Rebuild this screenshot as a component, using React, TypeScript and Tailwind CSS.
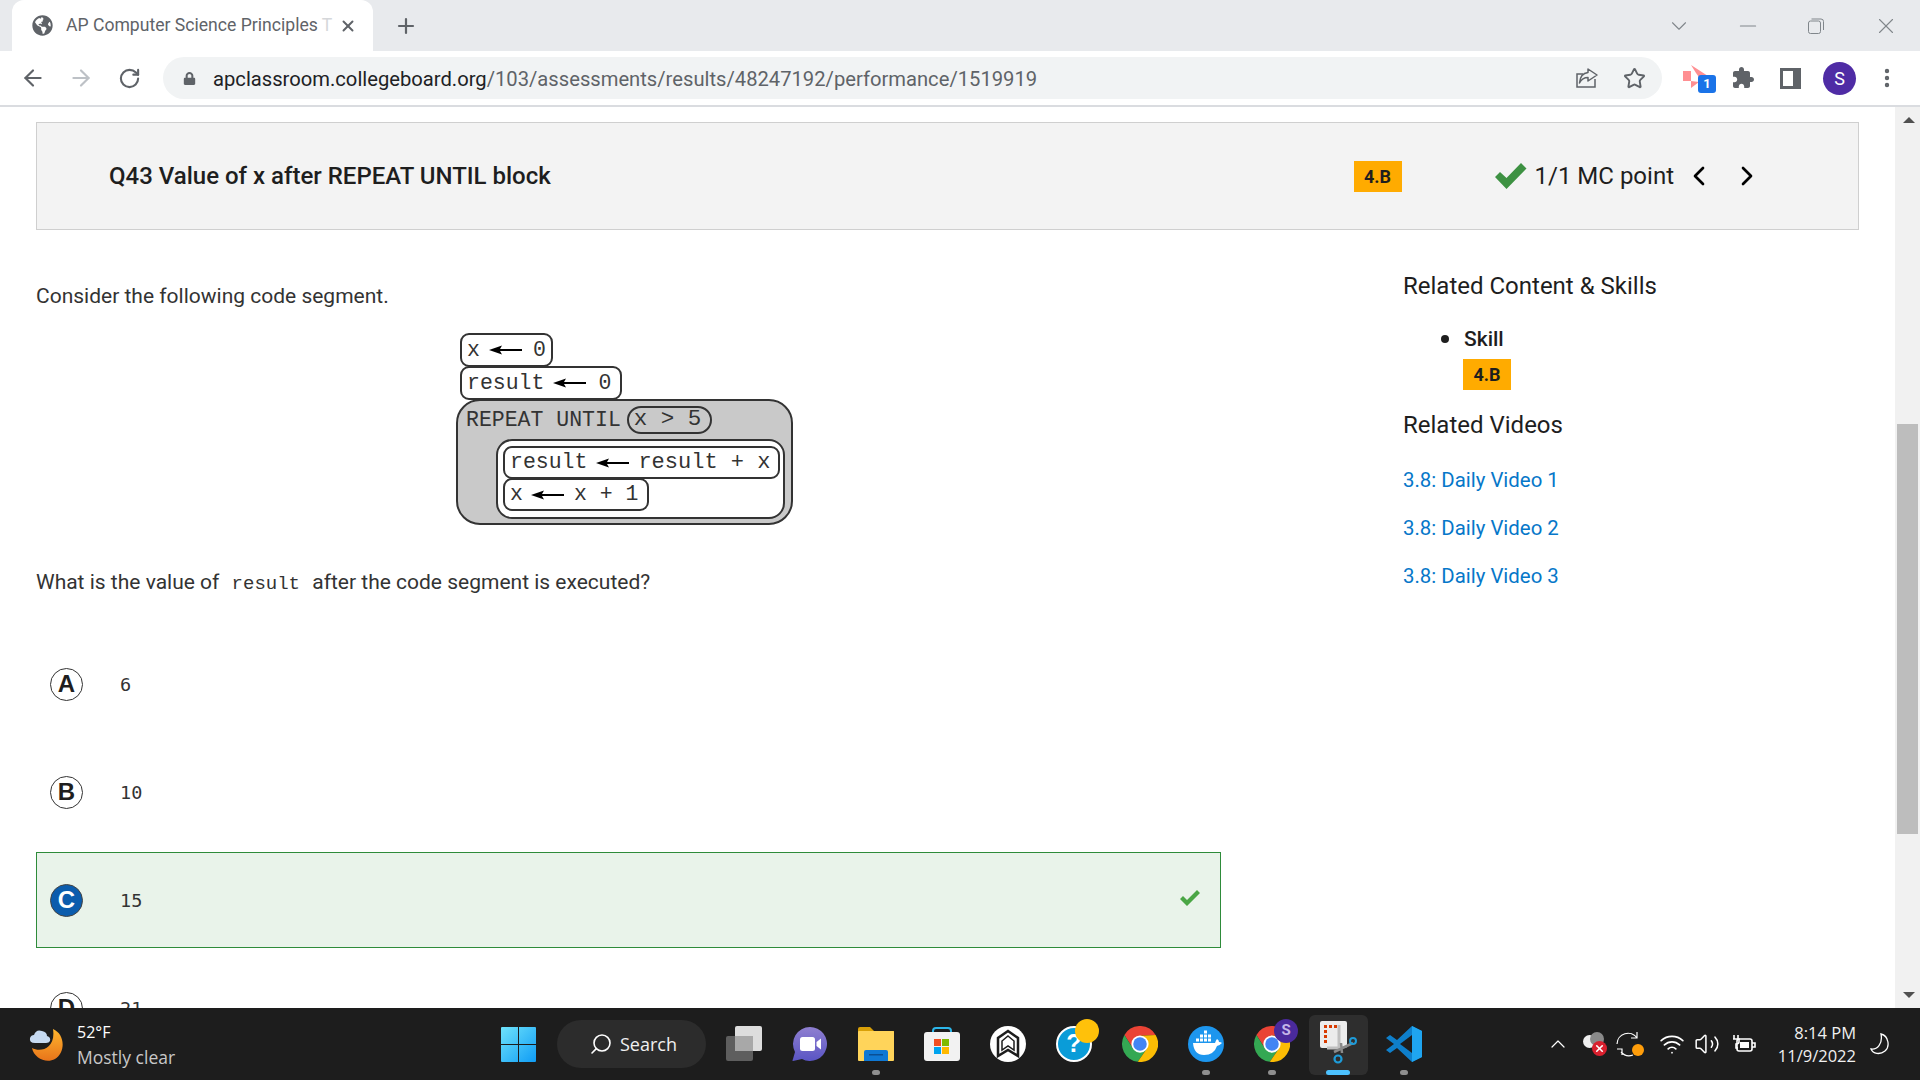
import { ArrowLeft, ArrowRight, ChevronDown, ChevronLeft, ChevronRight, ChevronUp, Minus, MoreVertical, Plus, RotateCw, Search, Star, Volume2, Wifi, X } from "lucide-react";
import { FaGlobeAmericas, FaLock } from "react-icons/fa";
import type { ReactNode } from "react";

function ChromeLogo() {
  return (
    <svg width="36" height="36" viewBox="0 0 48 48">
      <path d="M24 13 L44.8 12 A24 24 0 0 0 3.2 12 L14.5 29.5 Z" fill="#ea4335" />
      <path d="M3.2 12 A24 24 0 0 0 21 47.8 L33.5 29.5 L14.5 29.5 Z" fill="#34a853" />
      <path d="M44.8 12 L24 13 L33.5 29.5 L21 47.8 A24 24 0 0 0 44.8 12 Z" fill="#fbbc04" />
      <circle cx="24" cy="24" r="11.5" fill="#fff" />
      <circle cx="24" cy="24" r="9" fill="#4285f4" />
    </svg>
  );
}

function Arrow() {
  return (
    <svg width="33" height="10" viewBox="0 0 33 10" className="shrink-0">
      <path d="M0 5 L13 0.5 L11 4 L33 4 L33 6 L11 6 L13 9.5 Z" fill="#000" />
    </svg>
  );
}

function CodeBox({ className, children }: { className: string; children: ReactNode }) {
  return (
    <div className={`flex items-center border-2 border-[#333] bg-white rounded-[9px] font-['Liberation_Mono',monospace] text-[21.5px] text-[#333] whitespace-pre ${className}`}>
      {children}
    </div>
  );
}

function Diagram() {
  return (
    <div className="ml-[420px] mt-[23px] w-[337px] flex flex-col">
      <CodeBox className="ml-[4px] w-[93px] h-[34px] pl-[5px]">
        x<span className="w-[9px]" /><Arrow /><span className="w-[11px]" />0
      </CodeBox>
      <CodeBox className="ml-[4px] -mt-px w-[162px] h-[34px] pl-[5px]">
        result<span className="w-[9px]" /><Arrow /><span className="w-[12px]" />0
      </CodeBox>
      <div className="relative -mt-px h-[126px] rounded-[24px] border-2 border-[#333] bg-[#c9c9c9] pl-[8px] pt-[5px]">
        <div className="flex items-center">
          <span className="font-['Liberation_Mono',monospace] text-[21.5px] text-[#333] leading-[27px]">REPEAT UNTIL</span>
          <div className="ml-[6px] w-[85px] h-[28px] rounded-[14px] border-2 border-[#333] bg-[#c9c9c9] pl-[5px] flex items-center font-['Liberation_Mono',monospace] text-[22.5px] text-[#333] whitespace-pre">x &gt; 5</div>
        </div>
        <div className="ml-[30px] mt-[5px] mr-[6px] w-[289px] h-[80px] rounded-[16px] border-2 border-[#333] bg-white pl-[5px] pt-[5px]">
          <CodeBox className="w-[277px] h-[33px] pl-[5px]">
            result<span className="w-[9px]" /><Arrow /><span className="w-[9px]" /><span className="text-[22px]">result + x</span>
          </CodeBox>
          <CodeBox className="-mt-px w-[146px] h-[33px] pl-[5px]">
            x<span className="w-[8px]" /><Arrow /><span className="w-[10px]" />x + 1
          </CodeBox>
        </div>
      </div>
    </div>
  );
}

function Badge({ className = "" }: { className?: string }) {
  return (
    <div className={`w-[48px] h-[31px] bg-[#ffab00] flex items-center justify-center text-[18px] font-bold text-[#1e1e1e] ${className}`}>4.B</div>
  );
}

function Option({ letter, value, correct }: { letter: string; value: string; correct?: boolean }) {
  return (
    <div className={`relative h-[96px] mb-[12px] flex items-center ${correct ? "border border-[#2e8b3a] bg-[#e9f3ea] pl-[13px]" : "pl-[14px]"}`}>
      <div className={`w-[33px] h-[33px] rounded-full flex items-center justify-center text-[24px] font-bold font-['Liberation_Sans',sans-serif] ${correct ? "bg-[#0b5cad] border border-[#444] text-white" : "border border-[#333] text-[#1e1e1e]"}`}>
        {letter}
      </div>
      <span className="ml-[37px] mt-[1px] font-['DejaVu_Sans_Mono',monospace] text-[18.5px] text-[#333]">{value}</span>
      {correct && (
        <svg className="ml-auto mr-[20px] -mt-[4px]" width="20" height="16" viewBox="0 0 20 16">
          <path d="M0 9 L3 6 L7 10 L17 0 L20 3 L7 16 Z" fill="#4aa645" />
        </svg>
      )}
    </div>
  );
}

function Dock({ children, dot, active }: { children: ReactNode; dot?: boolean; active?: boolean }) {
  return (
    <div className="relative w-[66px] h-full flex items-center justify-center">
      {active && <div className="absolute left-[4px] top-[7px] w-[59px] h-[60px] rounded-[6px] bg-[#2e2e2e]" />}
      <div className="relative -mt-[1px] flex items-center justify-center">{children}</div>
      {dot && <div className="absolute bottom-[5px] left-[29px] w-[8px] h-[5px] rounded-full bg-[#8f8f8f]" />}
      {active && <div className="absolute bottom-[5px] left-[21px] w-[24px] h-[5px] rounded-full bg-[#4cc2ff]" />}
    </div>
  );
}

export default function App() {
  return (
    <div className="w-[1920px] h-[1080px] flex flex-col overflow-hidden bg-white font-['Roboto',sans-serif] text-[#1e1e1e]">
      {/* tab strip */}
      <div className="h-[51px] bg-[#e8eaed] flex items-stretch pl-[12px]">
        <div className="w-[361px] rounded-t-[12px] bg-white flex items-center pl-[20px]">
          <FaGlobeAmericas className="text-[#5f6368] shrink-0" size={21} />
          <div className="ml-[13px] w-[268px] whitespace-nowrap text-[17.6px] text-[#5f6368]">
            AP Computer Science Principles <span className="text-[#d5d7da]">T</span>
          </div>
          <X className="ml-[5px] text-[#5f6368] shrink-0" size={18} strokeWidth={2.6} />
        </div>
        <div className="ml-[21px] flex items-center">
          <Plus className="text-[#5f6368]" size={24} strokeWidth={2.2} />
        </div>
        <div className="ml-auto flex items-center pr-[21px] text-[#80868b]">
          <ChevronDown size={26} strokeWidth={1} />
          <Minus className="ml-[43px]" size={26} strokeWidth={1} />
          <svg className="ml-[47px]" width="16" height="16" viewBox="0 0 16 16" fill="none" stroke="#80868b" strokeWidth="1">
            <rect x="0.5" y="3" width="12" height="12.5" rx="2" />
            <path d="M3.5 1 H13 Q15.5 1 15.5 3.5 V12" />
          </svg>
          <X className="ml-[49px]" size={26} strokeWidth={1} />
        </div>
      </div>

      {/* address bar */}
      <div className="h-[56px] border-b-2 border-[#dadce0] flex items-start pl-[9px] pt-[6px]">
        <div className="flex w-[144px]">
          <div className="w-[48px] h-[42px] flex items-center justify-center"><ArrowLeft className="text-[#5f6368]" size={26} strokeWidth={2} /></div>
          <div className="w-[48px] h-[42px] flex items-center justify-center"><ArrowRight className="text-[#bdc1c6]" size={26} strokeWidth={2} /></div>
          <div className="w-[48px] h-[42px] flex items-center justify-center"><RotateCw className="text-[#5f6368]" size={23} strokeWidth={2.2} /></div>
        </div>
        <div className="ml-[10px] w-[1499px] h-[42px] rounded-full bg-[#f1f3f4] flex items-center pl-[20px]">
          <FaLock className="text-[#5f6368]" size={13} />
          <div className="ml-[17px] mt-[2px] text-[20.2px] whitespace-nowrap text-[#202124]">
            apclassroom.collegeboard.org<span className="text-[#5f6368]">/103/assessments/results/48247192/performance/1519919</span>
          </div>
          <div className="ml-auto flex items-center pr-[16px]">
            <svg width="24" height="24" viewBox="0 0 24 24" fill="none" stroke="#5f6368" strokeWidth="1.5">
              <path d="M20 13 V21 H2 V8 H8" />
              <path d="M13 3 L22 9 L13 15 V11.5 C9 11.5 6.5 13 4.5 17 C5 11 8 7 13 6.5 Z" strokeLinejoin="round" />
            </svg>
            <Star className="ml-[24px] text-[#5f6368]" size={23} strokeWidth={2} />
          </div>
        </div>
        <div className="ml-[21px] h-[42px] flex items-center relative w-[28px]">
          <svg width="26" height="24" viewBox="0 0 26 24" className="-mt-[2px]">
            <path d="M8 0 L25 11 L18 15 L13 8 Z M0 6 H8 V16 H0 Z M8 16 L16 17 L8 23 Z" fill="#ff8f92" />
          </svg>
          <div className="absolute left-[15px] top-[18px] w-[18px] h-[18px] rounded-[3px] bg-[#1a73e8] text-white text-[13px] font-bold flex items-center justify-center">1</div>
        </div>
        <div className="ml-[20px] h-[42px] flex items-center">
          <svg width="24" height="24" viewBox="0 0 24 24" fill="#5f6368">
            <path d="M20.5 11H19V7c0-1.1-.9-2-2-2h-4V3.5C13 2.12 11.88 1 10.5 1S8 2.12 8 3.5V5H4c-1.1 0-1.99.9-1.99 2v3.8H3.5c1.49 0 2.7 1.21 2.7 2.7s-1.21 2.7-2.7 2.7H2V20c0 1.1.9 2 2 2h3.8v-1.5c0-1.49 1.21-2.7 2.7-2.7 1.49 0 2.7 1.21 2.7 2.7V22H17c1.1 0 2-.9 2-2v-4h1.5c1.38 0 2.5-1.12 2.5-2.5S21.88 11 20.5 11z" />
          </svg>
        </div>
        <div className="ml-[25px] h-[42px] flex items-center">
          <div className="w-[21px] h-[21px] border-[3px] border-[#5f6368] border-r-[8px]" />
        </div>
        <div className="ml-[22px] h-[42px] flex items-center">
          <div className="w-[33px] h-[33px] rounded-full bg-[#4f2ca5] text-white text-[18px] flex items-center justify-center">S</div>
        </div>
        <div className="ml-[19px] h-[42px] flex items-center"><MoreVertical className="text-[#5f6368]" size={24} strokeWidth={2.4} /></div>
      </div>

      {/* page */}
      <div className="flex-1 flex min-h-0 overflow-hidden">
        <main className="w-[1895px] pl-[36px] pt-[15px]">
          <div className="w-[1823px] h-[108px] border border-[#cfcfcf] bg-[#f3f3f3] flex items-center pl-[72px] pr-[95px]">
            <h1 className="flex-1 text-[24px] font-medium">Q43 Value of x after REPEAT UNTIL block</h1>
            <Badge />
            <svg className="ml-[93px]" width="32" height="26" viewBox="0 0 32 26">
              <path d="M0 14 L5 9 L11.5 15 L26 0 L31.5 5.5 L11.5 26 Z" fill="#3d9142" />
            </svg>
            <span className="ml-[8px] text-[24px]">1/1 MC point</span>
            <ChevronLeft className="ml-[9px] text-black" size={32} strokeWidth={2} />
            <ChevronRight className="ml-[16px] text-black" size={32} strokeWidth={2} />
          </div>

          <div className="flex">
            <section className="w-[1185px] pt-[52px]">
              <p className="text-[21px] leading-[28px] text-[#333]">Consider the following code segment.</p>
              <Diagram />
              <p className="mt-[43px] text-[21px] leading-[28px] text-[#333] flex items-baseline whitespace-pre">
                What is the value of <span className="mx-[7px] font-['Liberation_Mono',monospace] text-[19px]">result</span> after the code segment is executed?
              </p>
              <div className="mt-[38px]">
                <Option letter="A" value="6" />
                <Option letter="B" value="10" />
                <Option letter="C" value="15" correct />
                <Option letter="D" value="21" />
              </div>
            </section>
            <aside className="ml-[182px] pt-[40px]">
              <h2 className="text-[24px] leading-[32px]">Related Content &amp; Skills</h2>
              <div className="mt-[23px] ml-[38px] flex">
                <div className="mt-[10px] w-[8px] h-[8px] rounded-full bg-[#1e1e1e]" />
                <div className="ml-[15px]">
                  <div className="text-[21px] leading-[28px] font-medium">Skill</div>
                  <Badge className="-ml-px mt-[6px]" />
                </div>
              </div>
              <h2 className="mt-[19px] text-[24px] leading-[32px]">Related Videos</h2>
              <div className="mt-[25px] flex flex-col gap-[20px] text-[20.4px] leading-[28px] text-[#0677c9]">
                <a>3.8: Daily Video 1</a>
                <a>3.8: Daily Video 2</a>
                <a>3.8: Daily Video 3</a>
              </div>
            </aside>
          </div>
        </main>

        {/* scrollbar */}
        <div className="w-[25px] bg-[#f1f1f1] flex flex-col items-end">
          <div className="w-[23px] h-[26px] flex items-center justify-center text-[#505050]">
            <div className="w-0 h-0 border-l-[6px] border-r-[6px] border-b-[6px] border-l-transparent border-r-transparent border-b-[#505050]" />
          </div>
          <div className="mt-[291px] w-[21px] mr-[2px] h-[410px] bg-[#bdbdbd]" />
          <div className="w-[23px] mt-auto h-[26px] flex items-center justify-center">
            <div className="w-0 h-0 border-l-[6px] border-r-[6px] border-t-[6px] border-l-transparent border-r-transparent border-t-[#505050]" />
          </div>
        </div>
      </div>

      {/* taskbar */}
      <div className="h-[72px] bg-[#1d1d1d] flex items-stretch text-white">
        <div className="w-[501px] shrink-0 pl-[29px] flex items-center">
          <svg width="36" height="36" viewBox="0 0 36 36">
            <defs>
              <linearGradient id="moon" x1="0" y1="0" x2="0" y2="1">
                <stop offset="0" stopColor="#ffb62e" />
                <stop offset="1" stopColor="#e8741a" />
              </linearGradient>
            </defs>
            <path d="M24 3 C36 8 37 26 26 33 C17 38 5 32 3 22 C12 27 27 22 24 3 Z" fill="url(#moon)" />
            <path d="M6 17 Q0 17 1 12 Q2 9 5 9 Q7 3 13 5 Q18 6 18 10 Q22 11 21 15 Q20 17 17 17 Z" fill="#c6daf2" />
          </svg>
          <div className="ml-[12px] mt-[2px] flex flex-col font-['Open_Sans',sans-serif] leading-[25px]">
            <span className="text-[16px]">52°F</span>
            <span className="text-[#c8c8c8] text-[17.5px]">Mostly clear</span>
          </div>
        </div>
        <div className="flex items-center shrink-0">
          <svg width="35" height="35" viewBox="0 0 35 35">
            <defs>
              <linearGradient id="win" x1="0" y1="0" x2="1" y2="1">
                <stop offset="0" stopColor="#6fe3fb" />
                <stop offset="1" stopColor="#0f9cf5" />
              </linearGradient>
            </defs>
            <path d="M0 1 Q0 0 1 0 H17 V17 H0 Z M18 0 H34 Q35 0 35 1 V17 H18 Z M0 18 H17 V35 H1 Q0 35 0 34 Z M18 18 H35 V34 Q35 35 34 35 H18 Z" fill="url(#win)" />
          </svg>
          <div className="ml-[21px] w-[149px] h-[48px] rounded-full bg-[#2c2c2c] flex items-center pl-[32px]">
            <Search size={24} strokeWidth={1.6} className="-scale-x-100" />
            <span className="ml-[7px] text-[18px] font-['Open_Sans',sans-serif] text-[#f0f0f0]">Search</span>
          </div>
        </div>
        <div className="ml-[5px] flex items-stretch shrink-0">
          <Dock>
            <div className="relative w-[36px] h-[35px]">
              <div className="absolute left-0 bottom-0 w-[27px] h-[25px] rounded-[2px] bg-[#5e5e5e]" />
              <div className="absolute right-0 top-0 w-[27px] h-[25px] rounded-[2px] bg-[#e8e8e8] opacity-95" />
              <div className="absolute left-[9px] top-[10px] w-[18px] h-[15px] bg-[#a8a8a8]" />
            </div>
          </Dock>
          <Dock>
            <svg width="36" height="36" viewBox="0 0 36 36">
              <defs>
                <linearGradient id="meet" x1="0" y1="0" x2="0" y2="1">
                  <stop offset="0" stopColor="#8f7fd0" />
                  <stop offset="1" stopColor="#5a55c4" />
                </linearGradient>
              </defs>
              <path d="M18 1 A17 17 0 1 1 10 33 L1 35 Q0 35 1 33 L3 26 A17 17 0 0 1 18 1 Z" fill="url(#meet)" />
              <rect x="8" y="11" width="15" height="14" rx="2.5" fill="#fff" />
              <path d="M24.5 16 L29 12.5 V23.5 L24.5 20 Z" fill="#fff" />
            </svg>
          </Dock>
          <Dock dot>
            <svg width="36" height="34" viewBox="0 0 36 34">
              <path d="M0 2 Q0 0 2 0 H12 L16 4 H36 V12 H0 Z" fill="#d9a008" />
              <rect y="4" width="36" height="30" rx="1" fill="#ffd45a" />
              <path d="M6 34 V25 Q6 23 8 23 H28 Q30 23 30 25 V34 Z" fill="#0f78d4" />
              <rect x="11" y="27" width="14" height="1.5" fill="#0a4f94" />
            </svg>
          </Dock>
          <Dock>
            <svg width="36" height="36" viewBox="0 0 36 36">
              <path d="M9 9 V5 Q9 2 12 2 H24 Q27 2 27 5 V9" fill="none" stroke="#2cb6ea" strokeWidth="2" />
              <rect y="6" width="36" height="29" rx="3" fill="#f2f2f2" />
              <rect x="10" y="13" width="7" height="7" fill="#f25022" />
              <rect x="18" y="13" width="7" height="7" fill="#7fba00" />
              <rect x="10" y="21" width="7" height="7" fill="#00a4ef" />
              <rect x="18" y="21" width="7" height="7" fill="#ffb900" />
            </svg>
          </Dock>
          <Dock>
            <svg width="36" height="36" viewBox="0 0 36 36">
              <circle cx="18" cy="18" r="18" fill="#fff" />
              <path d="M18 5 L28 12 V30 L18 24 L8 30 V12 Z" fill="none" stroke="#1d1d1d" strokeWidth="2.5" />
              <path d="M18 10 L24 15 V24 L18 20 L12 24 V15 Z" fill="#fff" stroke="#1d1d1d" strokeWidth="1.5" />
            </svg>
          </Dock>
          <Dock>
            <div className="relative w-[36px] h-[36px] rounded-full bg-[#0a9cd8] border-2 border-white flex items-center justify-center text-[25px] font-bold font-['Liberation_Sans',sans-serif] text-white">
              ?
              <div className="absolute -right-[9px] -top-[9px] w-[24px] h-[24px] rounded-full bg-[#ffc10a]" />
            </div>
          </Dock>
          <Dock><ChromeLogo /></Dock>
          <Dock dot>
            <svg width="36" height="36" viewBox="0 0 36 36">
              <circle cx="18" cy="18" r="18" fill="#1d96ee" />
              <path d="M5 17 H27 Q28 14 29 13 Q31 14 31 16 Q33 16 34 17 Q31 20 29 20 Q26 29 16 29 Q6 29 5 17 Z" fill="#fff" />
              <path d="M8 12.5 H11 V15.5 H8 Z M12 12.5 H15 V15.5 H12 Z M16 12.5 H19 V15.5 H16 Z M20 12.5 H23 V15.5 H20 Z M12 8.5 H15 V11.5 H12 Z M16 8.5 H19 V11.5 H16 Z M20 8.5 H23 V11.5 H20 Z M16 4.5 H19 V7.5 H16 Z" fill="#fff" />
            </svg>
          </Dock>
          <Dock dot>
            <div className="relative">
              <ChromeLogo />
              <div className="absolute -right-[8px] -top-[7px] w-[24px] h-[24px] rounded-full bg-[#4a2a9c] text-[#c4b5e8] text-[15px] font-bold flex items-center justify-center">S</div>
            </div>
          </Dock>
          <Dock active>
            <svg width="37" height="46" viewBox="0 0 37 46">
              <rect x="0" y="0" width="27" height="27" rx="2" fill="#ececec" />
              <path d="M4 4 H7 V7 H4 Z M9 4 H12 V7 H9 Z M14 4 H17 V7 H14 Z M4 9 H7 V12 H4 Z M4 14 H7 V17 H4 Z M4 19 H7 V22 H4 Z" fill="#d83b01" />
              <path d="M19 4 V27 H7" fill="none" stroke="#c0c0c0" strokeWidth="3" />
              <path d="M21 22 L22 32 M14 31 L33 22" stroke="#8a8a8a" strokeWidth="2.5" />
              <circle cx="33" cy="20" r="3" fill="none" stroke="#1e9bd8" strokeWidth="2" />
              <circle cx="18" cy="38" r="3.5" fill="none" stroke="#1e9bd8" strokeWidth="2.2" />
            </svg>
          </Dock>
          <Dock dot>
            <svg width="36" height="36" viewBox="0 0 36 36">
              <path d="M26 0 L36 5 V31 L26 36 L11 22 L4 27 L0 24 L8 18 L0 12 L4 9 L11 14 Z" fill="#0e7fcb" />
              <path d="M26 0 L36 5 V31 L26 36 Z" fill="#1fa5f0" />
              <path d="M26 9 V27 L14 18 Z" fill="#1d1d1d" />
            </svg>
          </Dock>
        </div>
        <div className="ml-[109px] flex items-center shrink-0">
          <ChevronUp size={24} strokeWidth={1.2} />
          <div className="ml-[12px] relative w-[24px] h-[24px]">
            <div className="absolute left-[1px] top-[3px] w-[13px] h-[13px] rounded-full bg-[#f0f0f0]" />
            <div className="absolute left-[8px] top-0 w-[14px] h-[14px] rounded-full bg-[#8a8a8a]" />
            <div className="absolute left-[10px] top-[9px] w-[15px] h-[15px] rounded-full bg-[#d9202e] flex items-center justify-center">
              <X size={11} strokeWidth={3.5} />
            </div>
          </div>
          <div className="ml-[10px] relative w-[26px] h-[26px]">
            <svg width="26" height="26" viewBox="0 0 26 26" fill="none" stroke="#fff" strokeWidth="1.2">
              <path d="M1 13 A11 11 0 0 1 21 7 M21 1 V7 H15" />
              <path d="M17 24 A11 11 0 0 1 5 21 M1 18 H6 V24" />
            </svg>
            <div className="absolute right-[-2px] bottom-[1px] w-[12px] h-[12px] rounded-full bg-[#ff9d0a]" />
          </div>
          <Wifi className="ml-[17px]" size={26} strokeWidth={1.6} />
          <Volume2 className="ml-[9px]" size={26} strokeWidth={1.4} />
          <svg className="ml-[12px]" width="24" height="18" viewBox="0 0 24 18" fill="none" stroke="#fff" strokeWidth="1.6">
            <rect x="5" y="4" width="15" height="12" rx="2" />
            <rect x="8" y="7" width="9" height="6" fill="#fff" stroke="none" />
            <path d="M20 8 H23 V12 H20 M2 0 V4 M6 0 V4 M1 4 H7 V7 Q7 9 4 9 V13 H6" />
          </svg>
          <div className="w-[100px] flex flex-col items-end text-[16.5px] leading-[23px] text-[#f0f0f0] font-['Open_Sans',sans-serif] whitespace-nowrap">
            <span>8:14 PM</span>
            <span>11/9/2022</span>
          </div>
          <svg className="ml-[14px]" width="20" height="22" viewBox="0 0 20 22" fill="none" stroke="#fff" strokeWidth="1.3">
            <path d="M11 1 C19 3 20 14 15 18 C10 22 3 21 1 16 C7 17 13 11 11 1 Z" />
          </svg>
        </div>
      </div>
    </div>
  );
}
